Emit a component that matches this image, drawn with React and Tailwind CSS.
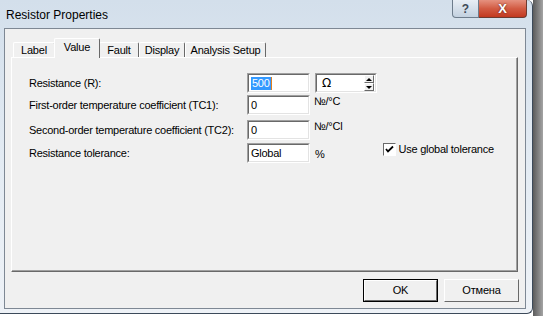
import React from 'react'

const ui = { fontFamily: '"Liberation Sans", Arial, sans-serif' }

// classic sunken edit border
const sunken = 'border border-t-[#a0a0a0] border-l-[#a0a0a0] border-r-white border-b-white'
const sunkenInner = 'border border-t-[#696969] border-l-[#696969] border-r-[#e3e3e3] border-b-[#e3e3e3]'

const Edit = ({ value, selected, width = 'w-[63px]' }) => (
  <div className={`${sunken} ${width} h-[20px]`}>
    <div className={`${sunkenInner} bg-white h-full flex items-center pl-[2px] text-[11px] text-black`}>
      {selected ? (
        <span className="bg-[#3399ff] text-white leading-[13px] px-[1px]">{value}</span>
      ) : (
        <span className="leading-[13px]">{value}</span>
      )}
      {selected && <span className="w-[1px] h-[13px] bg-[#e08020]" />}
    </div>
  </div>
)

const Tab = ({ label, active, w }) => (
  <div
    className={`${w} flex items-start justify-center border-t border-l border-t-white border-l-white border-r border-r-[#696969] rounded-t-[2px] bg-[#f0f0f0] ${
      active ? 'h-[20px] -mb-[1px] relative z-10 pt-[2px] -mx-[1px]' : 'h-[15px] pt-[1px]'
    }`}
  >
    <span className="text-[11px] leading-[13px] text-black tracking-[-0.2px]">{label}</span>
  </div>
)

const Button = ({ label, def }) => (
  <div className={`w-[75px] h-[23px] ${def ? 'border border-black' : ''}`}>
    <div className="h-full border border-t-white border-l-white border-r-[#696969] border-b-[#696969] bg-[#f0f0f0] flex items-center justify-center">
      <span className="text-[11px] text-black tracking-[-0.2px]">{label}</span>
    </div>
  </div>
)

export default function App() {
  return (
    <div className="w-[543px] h-[316px] overflow-hidden bg-white flex" style={ui}>
      <div className="w-[533px] flex flex-col">
        {/* window */}
        <div className="h-[314px] bg-gradient-to-b from-[#d3dfeb] via-[#e3ebf3] to-[#eef2f7] border-r border-b border-[#3c4a5a] rounded-br-[6px] rounded-tr-[6px] flex flex-col">
          <div className="h-[28px] flex items-start">
            <span className="ml-[6px] mt-[6px] text-[12px] text-black">Resistor Properties</span>
            <div className="ml-auto mr-[5px] flex">
              <div className="w-[27px] h-[18px] border border-[#6d7c8c] border-t-0 rounded-bl-[4px] bg-gradient-to-b from-[#e8eef5] to-[#c3d1e0] flex items-center justify-center">
                <span className="text-[12px] font-bold text-[#3f4b58] leading-none">?</span>
              </div>
              <div className="w-[48px] h-[18px] border border-[#6d3a30] border-t-0 border-l-0 rounded-br-[4px] bg-gradient-to-b from-[#e5917f] via-[#d25b43] to-[#c2381f] flex items-center justify-center">
                <span className="text-[13px] font-bold text-white leading-none" style={{ textShadow: '0 0 2px #4a1a10' }}>
                  X
                </span>
              </div>
            </div>
          </div>
          {/* client area */}
          <div className="ml-[4px] mr-[6px] h-[281px] border border-[#7e8894] bg-[#f0f0f0] flex flex-col">
            <div className="flex items-end pl-[8px] mt-[9px] h-[19px]">
              <Tab label="Label" w="w-[42px]" />
              <Tab label="Value" w="w-[46px]" active />
              <Tab label="Fault" w="w-[40px]" />
              <Tab label="Display" w="w-[46px]" />
              <Tab label="Analysis Setup" w="w-[81px]" />
            </div>
            {/* tab page */}
            <div className="ml-[6px] w-[507px] h-[215px] border-t border-l border-t-white border-l-white border-r border-b border-r-[#696969] border-b-[#696969]">
              <div className="h-full border-r border-b border-r-[#a0a0a0] border-b-[#a0a0a0] pl-[17px] pt-[15px] text-[11px] text-black tracking-[-0.25px]">
                <div className="flex items-center h-[20px]">
                  <span className="w-[218px]">Resistance (R):</span>
                  <Edit value="500" selected />
                  <div className="ml-[5px] w-[62px] h-[20px] border border-t-[#a0a0a0] border-l-[#a0a0a0] border-r-white border-b-white">
                    <div className={`${sunkenInner} bg-white h-full flex items-center`}>
                      <span className="ml-[5px] text-[12px]" style={{ fontFamily: '"DejaVu Sans", sans-serif' }}>Ω</span>
                      <div className="ml-auto mr-[1px] flex flex-col w-[10px] h-[16px]">
                        <div className="h-[8px] bg-[#f0f0f0] border border-t-white border-l-white border-r-[#696969] border-b-[#696969] flex items-center justify-center">
                          <div className="w-0 h-0 border-l-[3px] border-r-[3px] border-b-[3px] border-l-transparent border-r-transparent border-b-black" />
                        </div>
                        <div className="h-[8px] bg-[#f0f0f0] border border-t-white border-l-white border-r-[#696969] border-b-[#696969] flex items-center justify-center">
                          <div className="w-0 h-0 border-l-[3px] border-r-[3px] border-t-[3px] border-l-transparent border-r-transparent border-t-black" />
                        </div>
                      </div>
                    </div>
                  </div>
                </div>
                <div className="flex items-center h-[20px] mt-[2px]">
                  <span className="w-[218px]">First-order temperature coefficient (TC1):</span>
                  <Edit value="0" />
                  <span className="ml-[4px] self-start -mt-[2px]">№/°C</span>
                </div>
                <div className="flex items-center h-[20px] mt-[5px]">
                  <span className="w-[218px]">Second-order temperature coefficient (TC2):</span>
                  <Edit value="0" />
                  <span className="ml-[4px] self-start -mt-[2px]">№/°Cl</span>
                </div>
                <div className="flex items-center h-[20px] mt-[3px]">
                  <span className="w-[218px]">Resistance tolerance:</span>
                  <Edit value="Global" />
                  <span className="ml-[5px] mt-[2px]">%</span>
                  <div className="ml-[58px] -mt-[8px] flex items-center">
                    <div className="w-[13px] h-[13px] border border-t-[#696969] border-l-[#696969] border-r-white border-b-white bg-white flex items-center justify-center">
                      <svg width="9" height="9" viewBox="0 0 9 9">
                        <path d="M1 4 L3 6.5 L8 1.5" fill="none" stroke="black" strokeWidth="1.8" />
                      </svg>
                    </div>
                    <span className="ml-[3px]">Use global tolerance</span>
                  </div>
                </div>
              </div>
            </div>
            <div className="flex justify-end gap-[6px] mr-[6px] mt-[7px]">
              <Button label="OK" def />
              <Button label="Отмена" />
            </div>
          </div>
        </div>
      </div>
      <div className="flex-1 h-full bg-gradient-to-r from-[#5c5c5c] to-[#a4a4a4]" />
    </div>
  )
}
